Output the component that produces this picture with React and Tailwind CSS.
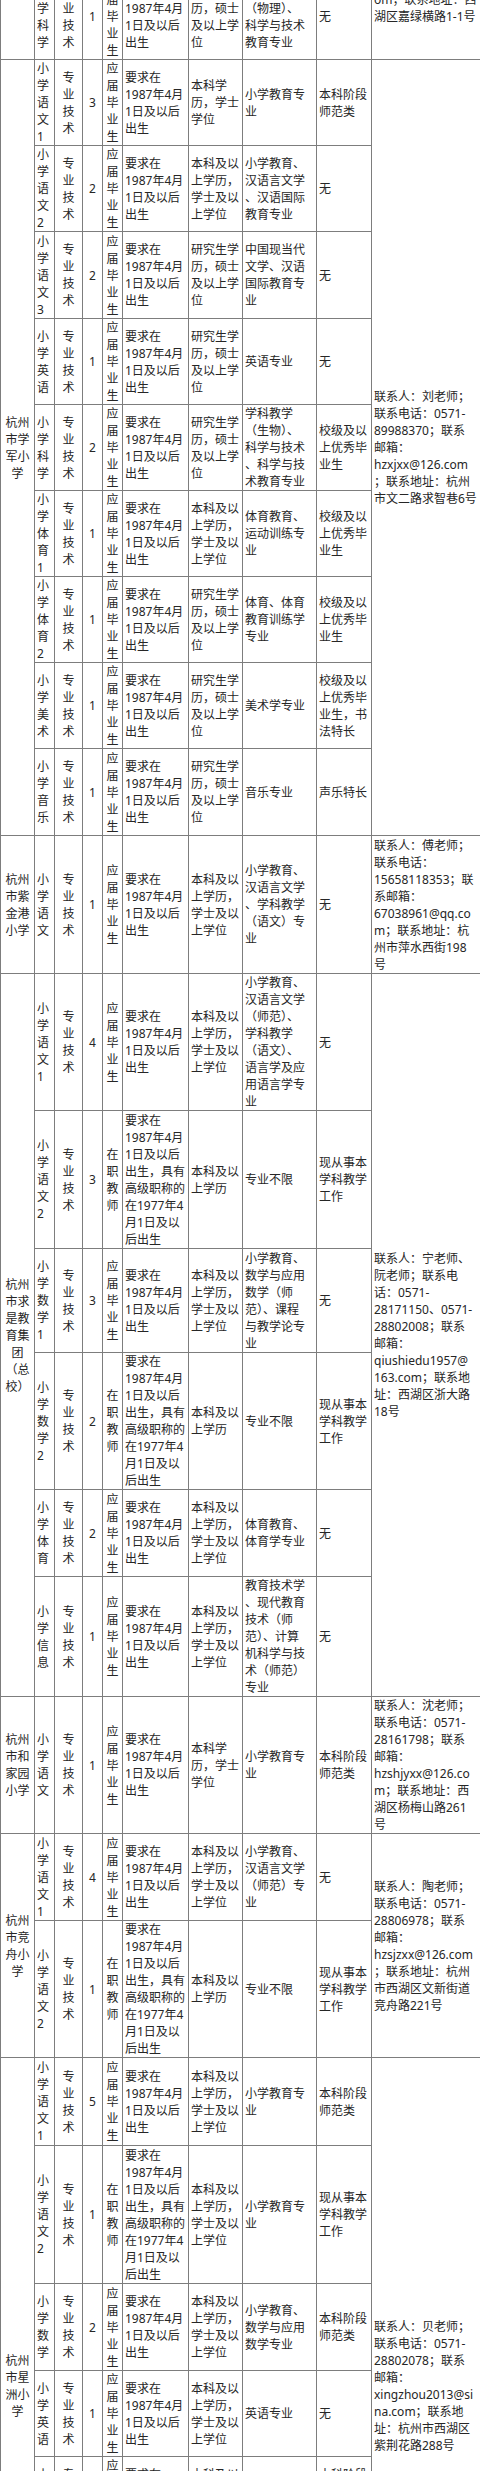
import clsx from "clsx";

const AGE_NEW = "要求在\n1987年4月\n1日及以后\n出生";
const AGE_JOB = "要求在\n1987年4月\n1日及以后\n出生，具有\n高级职称的\n在1977年4\n月1日及以\n后出生";
const EDU_M = "研究生学\n历，硕士\n及以上学\n位";
const EDU_B = "本科及以\n上学历，\n学士及以\n上学位";
const EDU_BS = "本科学\n历，学士\n学位";
const EDU_BO = "本科及以\n上学历";
const NEW = "应届毕业生";
const JOB = "在职教师";
const TOP = "校级及以\n上优秀毕\n业生";
const WORK = "现从事本\n学科教学\n工作";

const groups = [
  {
    school: "杭州\n市嘉\n绿苑\n小学",
    contact: "联系人：王老师；\n联系电话：0571-\n88213372；联系\n邮箱：\nhzjlyxx@126.c\nom；联系地址：西\n湖区嘉绿横路1-1号",
    rows: [
      { h: "h-[103px]", post: "小学数学", n: "1", kind: NEW, age: AGE_NEW, edu: EDU_M, major: "数学与应用\n数学专业", other: "无" },
      { h: "h-[85px]", post: "小学科学", n: "1", kind: NEW, age: AGE_NEW, edu: EDU_M, major: "学科教学\n（物理）、\n科学与技术\n教育专业", other: "无" },
    ],
  },
  {
    school: "杭州\n市学\n军小\n学",
    contact: "联系人：刘老师；\n联系电话：0571-\n89988370；联系\n邮箱：\nhzxjxx@126.com\n；联系地址：杭州\n市文二路求智巷6号",
    rows: [
      { h: "h-[86px]", post: "小学语文1", n: "3", kind: NEW, age: AGE_NEW, edu: EDU_BS, major: "小学教育专\n业", other: "本科阶段\n师范类" },
      { h: "h-[86px]", post: "小学语文2", n: "2", kind: NEW, age: AGE_NEW, edu: EDU_B, major: "小学教育、\n汉语言文学\n、汉语国际\n教育专业", other: "无" },
      { h: "h-[87px]", post: "小学语文3", n: "2", kind: NEW, age: AGE_NEW, edu: EDU_M, major: "中国现当代\n文学、汉语\n国际教育专\n业", other: "无" },
      { h: "h-[86px]", post: "小学英语", n: "1", kind: NEW, age: AGE_NEW, edu: EDU_M, major: "英语专业", other: "无" },
      { h: "h-[86px]", post: "小学科学", n: "2", kind: NEW, age: AGE_NEW, edu: EDU_M, major: "学科教学\n（生物）、\n科学与技术\n、科学与技\n术教育专业", other: TOP },
      { h: "h-[86px]", post: "小学体育1", n: "1", kind: NEW, age: AGE_NEW, edu: EDU_B, major: "体育教育、\n运动训练专\n业", other: TOP },
      { h: "h-[86px]", post: "小学体育2", n: "1", kind: NEW, age: AGE_NEW, edu: EDU_M, major: "体育、体育\n教育训练学\n专业", other: TOP },
      { h: "h-[86px]", post: "小学美术", n: "1", kind: NEW, age: AGE_NEW, edu: EDU_M, major: "美术学专业", other: "校级及以\n上优秀毕\n业生，书\n法特长" },
      { h: "h-[87px]", post: "小学音乐", n: "1", kind: NEW, age: AGE_NEW, edu: EDU_M, major: "音乐专业", other: "声乐特长" },
    ],
  },
  {
    school: "杭州\n市紫\n金港\n小学",
    contact: "联系人：傅老师；\n联系电话：\n15658118353；联\n系邮箱：\n67038961@qq.co\nm；联系地址：杭\n州市萍水西街198\n号",
    rows: [
      { h: "h-[138px]", post: "小学语文", n: "1", kind: NEW, age: AGE_NEW, edu: EDU_B, major: "小学教育、\n汉语言文学\n、学科教学\n（语文）专\n业", other: "无" },
    ],
  },
  {
    school: "杭州\n市求\n是教\n育集\n团\n（总\n校）",
    contact: "联系人：宁老师、\n阮老师；联系电\n话：0571-\n28171150、0571-\n28802008；联系\n邮箱：\nqiushiedu1957@\n163.com；联系地\n址：西湖区浙大路\n18号",
    rows: [
      { h: "h-[137px]", post: "小学语文1", n: "4", kind: NEW, age: AGE_NEW, edu: EDU_B, major: "小学教育、\n汉语言文学\n（师范）、\n学科教学\n（语文）、\n语言学及应\n用语言学专\n业", other: "无" },
      { h: "h-[138px]", post: "小学语文2", n: "3", kind: JOB, age: AGE_JOB, edu: EDU_BO, major: "专业不限", other: WORK },
      { h: "h-[104px]", post: "小学数学1", n: "3", kind: NEW, age: AGE_NEW, edu: EDU_B, major: "小学教育、\n数学与应用\n数学（师\n范）、课程\n与教学论专\n业", other: "无" },
      { h: "h-[137px]", post: "小学数学2", n: "2", kind: JOB, age: AGE_JOB, edu: EDU_BO, major: "专业不限", other: WORK },
      { h: "h-[87px]", post: "小学体育", n: "2", kind: NEW, age: AGE_NEW, edu: EDU_B, major: "体育教育、\n体育学专业", other: "无" },
      { h: "h-[120px]", post: "小学信息", n: "1", kind: NEW, age: AGE_NEW, edu: EDU_B, major: "教育技术学\n、现代教育\n技术（师\n范）、计算\n机科学与技\n术（师范）\n专业", other: "无" },
    ],
  },
  {
    school: "杭州\n市和\n家园\n小学",
    contact: "联系人：沈老师；\n联系电话：0571-\n28161798；联系\n邮箱：\nhzshjyxx@126.co\nm；联系地址：西\n湖区杨梅山路261\n号",
    rows: [
      { h: "h-[137px]", post: "小学语文", n: "1", kind: NEW, age: AGE_NEW, edu: EDU_BS, major: "小学教育专\n业", other: "本科阶段\n师范类" },
    ],
  },
  {
    school: "杭州\n市竞\n舟小\n学",
    contact: "联系人：陶老师；\n联系电话：0571-\n28806978；联系\n邮箱：\nhzsjzxx@126.com\n；联系地址：杭州\n市西湖区文新街道\n竞舟路221号",
    rows: [
      { h: "h-[87px]", post: "小学语文1", n: "4", kind: NEW, age: AGE_NEW, edu: EDU_B, major: "小学教育、\n汉语言文学\n（师范）专\n业", other: "无" },
      { h: "h-[136px]", post: "小学语文2", n: "1", kind: JOB, age: AGE_JOB, edu: EDU_BO, major: "专业不限", other: WORK },
    ],
  },
  {
    school: "杭州\n市星\n洲小\n学",
    contact: "联系人：贝老师；\n联系电话：0571-\n28802078；联系\n邮箱：\nxingzhou2013@si\nna.com；联系地\n址：杭州市西湖区\n紫荆花路288号",
    rows: [
      { h: "h-[88px]", post: "小学语文1", n: "5", kind: NEW, age: AGE_NEW, edu: EDU_B, major: "小学教育专\n业", other: "本科阶段\n师范类" },
      { h: "h-[138px]", post: "小学语文2", n: "1", kind: JOB, age: AGE_JOB, edu: EDU_B, major: "小学教育专\n业", other: WORK },
      { h: "h-[87px]", post: "小学数学", n: "2", kind: NEW, age: AGE_NEW, edu: EDU_B, major: "小学教育、\n数学与应用\n数学专业", other: "本科阶段\n师范类" },
      { h: "h-[86px]", post: "小学英语", n: "1", kind: NEW, age: AGE_NEW, edu: EDU_B, major: "英语专业", other: "无" },
      { h: "h-[86px]", post: "小学科学", n: "1", kind: NEW, age: AGE_NEW, edu: EDU_B, major: "科学教育专\n业", other: "本科阶段\n师范类，有\n相关教学经\n历者优先" },
      { h: "h-[86px]", post: "小学体育", n: "1", kind: NEW, age: AGE_NEW, edu: EDU_B, major: "体育教育专\n业", other: "无" },
      { h: "h-[86px]", post: "小学美术", n: "1", kind: NEW, age: AGE_NEW, edu: EDU_B, major: "美术学专业", other: "无" },
    ],
  },
];

const stack = (s) => s.split("").join("\n");

function Cell({ children, center, rowSpan }) {
  return (
    <td
      rowSpan={rowSpan}
      className={clsx(
        "border border-[#7d7d7d] px-[2px] py-0 align-middle whitespace-pre",
        center ? "text-center" : "text-left"
      )}
    >
      {children}
    </td>
  );
}

export default function App() {
  return (
    <div className="w-[480px] h-[2471px] overflow-hidden bg-white">
      <table className="table-fixed border-collapse w-[491px] mt-[-130px] text-[12px] leading-[17px] text-[#262626] font-['Noto_Sans','Noto_Sans_CJK_SC',sans-serif]">
        <colgroup>
          <col className="w-[34px]" />
          <col className="w-[20px]" />
          <col className="w-[28px]" />
          <col className="w-[20px]" />
          <col className="w-[20px]" />
          <col className="w-[66px]" />
          <col className="w-[54px]" />
          <col className="w-[74px]" />
          <col className="w-[55px]" />
          <col className="w-[120px]" />
        </colgroup>
        <tbody>
          {groups.map((g) =>
            g.rows.map((r, i) => (
              <tr key={g.school + i} className={r.h}>
                {i === 0 && (
                  <Cell center rowSpan={g.rows.length}>
                    {g.school}
                  </Cell>
                )}
                <Cell>{stack(r.post)}</Cell>
                <Cell center>{stack("专业技术")}</Cell>
                <Cell center>{r.n}</Cell>
                <Cell center>{stack(r.kind)}</Cell>
                <Cell>{r.age}</Cell>
                <Cell>{r.edu}</Cell>
                <Cell>{r.major}</Cell>
                <Cell>{r.other}</Cell>
                {i === 0 && <Cell rowSpan={g.rows.length}>{g.contact}</Cell>}
              </tr>
            ))
          )}
        </tbody>
      </table>
    </div>
  );
}
